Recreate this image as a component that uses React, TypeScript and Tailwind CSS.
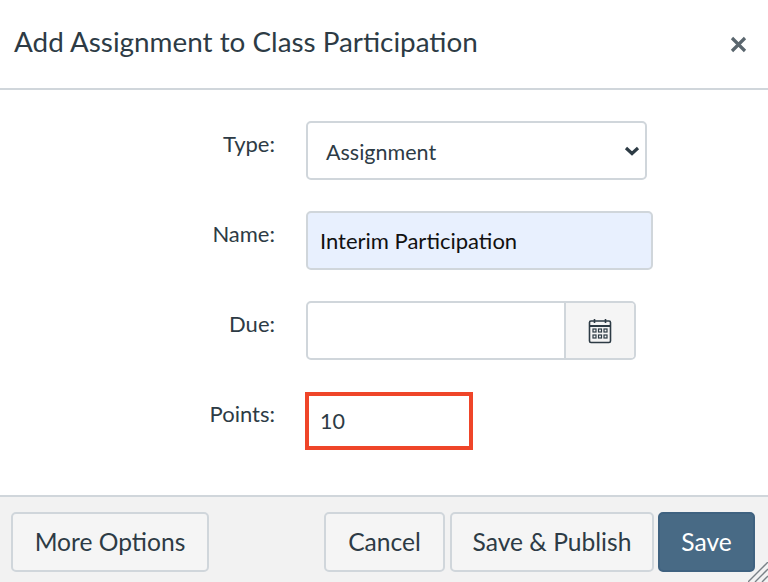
// App.tsx
const fieldBase = 'h-[59px] rounded-[5px] border-2 border-[#d0d6db]';
const btn = 'h-[60px] rounded-[5px] border-2 border-[#d0d6db] bg-[#f5f5f5] text-[24.6px] text-[#2d3b45]';

function FormRow({ label, children }: { label: string; children: React.ReactNode }) {
  return (
    <div className="flex h-[59px] items-start">
      <label className="w-[275px] pt-[7px] text-right text-[22px] leading-[32px] text-[#2d3b45]">{label}</label>
      <div className="ml-[31px]">{children}</div>
    </div>
  );
}

function CalendarIcon() {
  return (
    <svg width="24" height="26" viewBox="0 0 24 26" fill="none" stroke="#2d3b45" strokeWidth="1.6">
      <rect x="1.5" y="3" width="21" height="21.5" rx="1.5" />
      <path d="M1.5 8h21" strokeWidth="2" />
      <path d="M6.5 1v4M17.5 1v4" />
      <rect x="5" y="11" width="3" height="3" strokeWidth="1.2" />
      <rect x="10.5" y="11" width="3" height="3" strokeWidth="1.2" />
      <rect x="16" y="11" width="3" height="3" strokeWidth="1.2" />
      <rect x="5" y="17" width="3" height="3" strokeWidth="1.2" />
      <rect x="10.5" y="17" width="3" height="3" strokeWidth="1.2" />
      <rect x="16" y="17" width="3" height="3" strokeWidth="1.2" />
    </svg>
  );
}

export default function App() {
  return (
    <div className="relative flex h-[582px] w-[768px] flex-col overflow-hidden bg-white font-['Lato',sans-serif]">
      {/* Header */}
      <header className="flex h-[90px] shrink-0 items-center justify-between border-b-2 border-[#d0d6db] pl-[14px] pr-[21px]">
        <h1 className="pb-[4px] text-[27.85px] font-normal text-[#2d3b45]">Add Assignment to Class Participation</h1>
        <svg width="17" height="17" viewBox="0 0 17 17" stroke="#5a666e" strokeWidth="3.2">
          <path d="M2 2l13 13M15 2L2 15" />
        </svg>
      </header>

      {/* Form */}
      <main className="flex flex-1 flex-col gap-[31px] pt-[31px]">
        <FormRow label="Type:">
          <div className={`${fieldBase} flex w-[341px] items-center justify-between bg-white pl-[18px] pr-[5px]`}>
            <span className="pt-[4px] text-[21.5px] text-[#2d3b45]">Assignment</span>
            <svg width="16" height="10" viewBox="0 0 16 10" fill="none" stroke="#2d3b45" strokeWidth="3.2">
              <path d="M2 2l6 5.5L14 2" />
            </svg>
          </div>
        </FormRow>
        <FormRow label="Name:">
          <div className={`${fieldBase} flex w-[347px] items-center bg-[#e8f0fe] pl-[12px]`}>
            <span className="text-[22px] text-[#111111]">Interim Participation</span>
          </div>
        </FormRow>
        <FormRow label="Due:">
          <div className={`${fieldBase} flex w-[330px] overflow-hidden bg-white`}>
            <div className="flex-1" />
            <div className="flex w-[70px] items-center justify-center border-l-2 border-[#d0d6db] bg-[#f5f5f5]">
              <CalendarIcon />
            </div>
          </div>
        </FormRow>
        <FormRow label="Points:">
          <div className="-ml-[1px] mt-[1px] flex h-[58px] w-[168px] items-center border-4 border-[#ef4529] bg-white pl-[11px]">
            <span className="text-[21.5px] text-[#2d3b45]">10</span>
          </div>
        </FormRow>
      </main>

      {/* Footer */}
      <footer className="flex h-[87px] shrink-0 items-start justify-between border-t-2 border-[#d0d6db] bg-[#f2f2f2] pl-[11px] pr-[13px] pt-[15px]">
        <button className={`${btn} w-[198px]`}>More Options</button>
        <div className="flex gap-[4px]">
          <button className={`${btn} mr-[1px] w-[121px]`}>Cancel</button>
          <button className={`${btn} w-[204px]`}>Save &amp; Publish</button>
          <button className="h-[60px] w-[97px] rounded-[5px] border-2 border-[#3f6280] bg-[#486a85] text-[24.6px] text-white">Save</button>
        </div>
      </footer>

      {/* Resize handle */}
      <svg className="absolute bottom-0 right-0" width="20" height="20" viewBox="0 0 20 20" stroke="#7a8288" strokeWidth="1.4">
        <path d="M0 20L20 0M7 20L20 7M14 20l6-6" />
      </svg>
    </div>
  );
}
